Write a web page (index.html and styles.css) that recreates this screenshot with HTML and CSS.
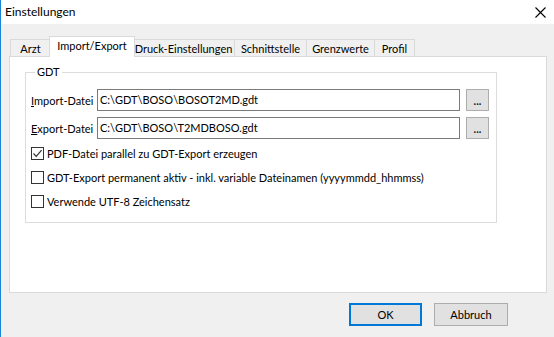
FILE: index.html
```html
<!DOCTYPE html>
<html lang="de">
<head>
<meta charset="utf-8">
<title>Einstellungen</title>
<link rel="stylesheet" href="styles.css">
</head>
<body>
<div class="window">
  <div class="titlebar">
    <span class="title">Einstellungen</span>
    <svg class="close" width="11" height="11" viewBox="0 0 11 11"><path d="M0.5 0.5 L10.5 10.5 M10.5 0.5 L0.5 10.5" stroke="#000" stroke-width="1.1" fill="none"/></svg>
  </div>
  <div class="body">
    <div class="tabs">
      <div class="tab t-arzt">Arzt</div>
      <div class="tab active t-import">Import/Export</div>
      <div class="tab t-druck">Druck-Einstellungen</div>
      <div class="tab t-schnitt">Schnittstelle</div>
      <div class="tab t-grenz">Grenzwerte</div>
      <div class="tab t-profil">Profil</div>
    </div>
    <div class="panel">
      <fieldset class="group">
        <legend>GDT</legend>
        <div class="row">
          <label class="lbl"><u>I</u>mport-Datei</label>
          <div class="input">C:\GDT\BOSO\BOSOT2MD.gdt</div>
          <div class="btn-dots">...</div>
        </div>
        <div class="row">
          <label class="lbl"><u>E</u>xport-Datei</label>
          <div class="input">C:\GDT\BOSO\T2MDBOSO.gdt</div>
          <div class="btn-dots">...</div>
        </div>
        <div class="checks">
          <div class="check">
            <span class="box"><svg width="11" height="11" viewBox="0 0 11 11"><path d="M1.5 5.5 L4.2 8.3 L9.6 2.2" stroke="#333" stroke-width="1.2" fill="none"/></svg></span>
            <span>PDF-Datei parallel zu GDT-Export erzeugen</span>
          </div>
          <div class="check">
            <span class="box"></span>
            <span>GDT-Export permanent aktiv - inkl. variable Dateinamen (yyyymmdd_hhmmss)</span>
          </div>
          <div class="check">
            <span class="box"></span>
            <span>Verwende UTF-8 Zeichensatz</span>
          </div>
        </div>
      </fieldset>
    </div>
    <div class="buttons">
      <div class="btn default">OK</div>
      <div class="btn">Abbruch</div>
    </div>
  </div>
</div>
</body>
</html>
```
FILE: styles.css
```css
html, body {
  margin: 0;
  padding: 0;
}
body {
  width: 554px;
  height: 337px;
  overflow: hidden;
  font-family: Lato, "Noto Sans", sans-serif;
  font-size: 11px;
  color: #000;
}
.window {
  width: 553px;
  height: 337px;
  border-left: 1px solid #1883d7;
  background: #f0f0f0;
  display: flex;
  flex-direction: column;
}
.titlebar {
  height: 24px;
  background: #fff;
  display: flex;
  align-items: center;
  justify-content: space-between;
  flex: none;
}
.title {
  padding-left: 4px;
  font-size: 12px;
  line-height: 24px;
}
.close {
  margin-right: 8px;
  margin-top: 1px;
}
.body {
  flex: 1;
  display: flex;
  flex-direction: column;
  padding: 12px 7px 0 8px;
}
.tabs {
  display: flex;
  align-items: flex-end;
  height: 20px;
  padding-left: 1px;
  position: relative;
  z-index: 1;
}
.tab {
  height: 17px;
  box-sizing: border-box;
  border: 1px solid #d9d9d9;
  border-bottom: none;
  border-left: none;
  background: #f0f0f0;
  text-align: center;
  line-height: 17px;
  white-space: nowrap;
}
.tab.t-arzt { width: 41px; border-left: 1px solid #d9d9d9; }
.tab.t-import { width: 86px; }
.tab.t-druck { width: 102px; }
.tab.t-schnitt { width: 72px; }
.tab.t-grenz { width: 68px; }
.tab.t-profil { width: 40px; }
.tab.active {
  height: 21px;
  margin: 0 -2px -1px -2px;
  background: #fff;
  border-left: 1px solid #d9d9d9;
  line-height: 18px;
  position: relative;
  z-index: 2;
}
.panel {
  height: 237px;
  box-sizing: border-box;
  background: #fff;
  border: 1px solid #d9d9d9;
  padding: 8px 0 0 15px;
}
.group {
  margin: 0;
  width: 472px;
  height: 158px;
  box-sizing: border-box;
  border: 1px solid #dcdcdc;
  padding: 10px 0 0 5px;
}
.group legend {
  padding: 0 2px;
  margin-left: 4px;
  line-height: 14px;
}
.row {
  display: flex;
  align-items: center;
  height: 22px;
  margin-bottom: 6px;
}
.lbl {
  width: 66px;
  flex: none;
  white-space: nowrap;
}
.input {
  width: 363px;
  height: 22px;
  box-sizing: border-box;
  border: 1px solid #7a7a7a;
  padding: 0 2px;
  line-height: 20px;
  font-size: 11px;
  white-space: nowrap;
}
.btn-dots {
  margin-left: 6px;
  width: 23px;
  height: 22px;
  box-sizing: border-box;
  border: 1px solid #adadad;
  background: #e1e1e1;
  text-align: center;
  line-height: 22px;
  font-weight: bold;
  font-size: 11px;
  color: #222;
}
.checks {
  margin-top: 8px;
  display: flex;
  flex-direction: column;
  gap: 11px;
}
.check {
  display: flex;
  align-items: center;
  height: 13px;
  white-space: nowrap;
}
.box {
  width: 13px;
  height: 13px;
  box-sizing: border-box;
  border: 1px solid #333;
  background: #fff;
  margin-right: 3px;
  display: flex;
  align-items: center;
  justify-content: center;
  flex: none;
}
.buttons {
  display: flex;
  justify-content: flex-end;
  gap: 12px;
  padding-top: 10px;
  padding-right: 39px;
}
.btn {
  width: 74px;
  height: 23px;
  box-sizing: border-box;
  border: 1px solid #adadad;
  background: #e1e1e1;
  text-align: center;
  line-height: 21px;
}
.btn.default {
  border: 2px solid #0078d7;
  line-height: 19px;
  width: 73px;
}
```
